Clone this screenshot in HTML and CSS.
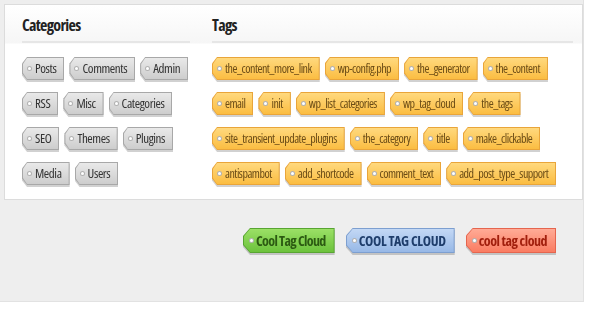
FILE: index.html
```html
<!DOCTYPE html>
<html lang="en">
<head>
    <meta charset="UTF-8">
    <title>Cool Tag Cloud</title>
    <link rel="stylesheet" href="styles.css">
</head>
<body>

    <div class="page">
        <div class="panel">
            <div class="col col-cat">
                <h3>Categories</h3>
                <div class="cloud">
                    <a class="tag silver"><span><span>Posts</span></span></a>
                    <a class="tag silver"><span><span>Comments</span></span></a>
                    <a class="tag silver"><span><span>Admin</span></span></a>
                    <a class="tag silver"><span><span>RSS</span></span></a>
                    <a class="tag silver"><span><span>Misc</span></span></a>
                    <a class="tag silver"><span><span>Categories</span></span></a>
                    <a class="tag silver"><span><span>SEO</span></span></a>
                    <a class="tag silver"><span><span>Themes</span></span></a>
                    <a class="tag silver"><span><span>Plugins</span></span></a>
                    <a class="tag silver"><span><span>Media</span></span></a>
                    <a class="tag silver"><span><span>Users</span></span></a>
                </div>
            </div>
            <div class="col col-tags">
                <h3>Tags</h3>
                <div class="cloud">
                    <a class="tag gold"><span><span>the_content_more_link</span></span></a>
                    <a class="tag gold"><span><span>wp-config.php</span></span></a>
                    <a class="tag gold"><span><span>the_generator</span></span></a>
                    <a class="tag gold"><span><span>the_content</span></span></a>
                    <a class="tag gold"><span><span>email</span></span></a>
                    <a class="tag gold"><span><span>init</span></span></a>
                    <a class="tag gold"><span><span>wp_list_categories</span></span></a>
                    <a class="tag gold"><span><span>wp_tag_cloud</span></span></a>
                    <a class="tag gold"><span><span>the_tags</span></span></a>
                    <a class="tag gold"><span><span>site_transient_update_plugins</span></span></a>
                    <a class="tag gold"><span><span>the_category</span></span></a>
                    <a class="tag gold"><span><span>title</span></span></a>
                    <a class="tag gold"><span><span>make_clickable</span></span></a>
                    <a class="tag gold"><span><span>antispambot</span></span></a>
                    <a class="tag gold"><span><span>add_shortcode</span></span></a>
                    <a class="tag gold"><span><span>comment_text</span></span></a>
                    <a class="tag gold"><span><span>add_post_type_support</span></span></a>
                </div>
            </div>
        </div>

        <div class="samples">
            <a class="tag big green"><span><span>Cool Tag Cloud</span></span></a>
            <a class="tag big blue"><span><span>COOL TAG CLOUD</span></span></a>
            <a class="tag big red"><span><span>cool tag cloud</span></span></a>
        </div>
    </div>

</body>
</html>
```

FILE: styles.css
```css
body {
    margin: 0;
    background: #fff;
    font-family: "Open Sans", "Liberation Sans", Arial, sans-serif;
    font-stretch: 75%;
}

.page {
    width: 584px;
    height: 302px;
    box-sizing: border-box;
    padding: 4px 0 0 4px;
    background: #eeeeee;
    border-bottom: 1px solid #e2e2e2;
    border-right: 1px solid #e2e2e2;
}

.panel {
    width: 579px;
    height: 196px;
    box-sizing: border-box;
    display: flex;
    gap: 22px;
    padding: 0 9px 0 17px;
    background: linear-gradient(#fff 0, #f6f6f6 38px, #fff 39px);
    border: 1px solid #dcdcdc;
}

.col-cat {
    width: 168px;
}

.col-tags {
    flex: 1;
}

h3 {
    margin: 0;
    height: 36px;
    line-height: 40px;
    font-size: 16px;
    font-weight: bold;
    letter-spacing: -0.7px;
    color: #222;
    border-bottom: 2px solid #e6e6e6;
}

.cloud {
    display: flex;
    flex-wrap: wrap;
    gap: 12px 5px;
    margin-top: 14px;
}

/* tag shape: outer = shadow, middle = border colour, inner = face */
.tag {
    display: block;
    filter: drop-shadow(0 2px 0 rgba(0, 0, 0, 0.18));
    cursor: pointer;
}

.tag > span {
    display: block;
    padding: 1px;
    clip-path: polygon(5px 0, 100% 0, 100% 100%, 5px 100%, 0 72%, 0 28%);
}

.tag > span > span {
    position: relative;
    display: block;
    height: 21px;
    line-height: 21px;
    padding: 0 7px 0 12px;
    font-size: 13px;
    letter-spacing: -0.4px;
    white-space: nowrap;
    clip-path: polygon(4px 0, 100% 0, 100% 100%, 4px 100%, 0 72%, 0 28%);
}

.tag > span > span::before {
    content: "";
    position: absolute;
    left: 4px;
    top: 8px;
    width: 3px;
    height: 3px;
    border-radius: 50%;
    background: #fff;
    border: 1px solid rgba(0, 0, 0, 0.3);
}

.silver > span { background: #a8a8a8; }
.silver > span > span {
    background: linear-gradient(#e9e9e9, #cdcdcd);
    color: #333;
}

.gold > span { background: #e9a53a; }
.gold > span > span {
    background: linear-gradient(#ffd97e, #fbbd42);
    color: #6b4c16;
    font-size: 12px;
    letter-spacing: -0.5px;
}

.samples {
    display: flex;
    gap: 11px;
    padding: 28px 0 0 239px;
}

.big > span {
    clip-path: polygon(7px 0, 100% 0, 100% 100%, 7px 100%, 0 68%, 0 32%);
}

.big > span > span {
    height: 23px;
    line-height: 23px;
    padding: 0 8px 0 12px;
    font-size: 14px;
    letter-spacing: -0.65px;
    font-weight: bold;
    clip-path: polygon(6px 0, 100% 0, 100% 100%, 6px 100%, 0 68%, 0 32%);
}

.big > span > span::before {
    top: 9px;
    left: 5px;
}

.green > span { background: #58a532; }
.green > span > span {
    background: linear-gradient(#9be066, #6cc23c);
    color: #2c5a12;
}

.blue > span { background: #7d9fd0; }
.blue > span > span {
    background: linear-gradient(#c3d8f5, #97b8e6);
    color: #1e3d6b;
    letter-spacing: -0.35px;
}

.red > span { background: #e5654e; }
.red > span > span {
    background: linear-gradient(#ffab96, #fa7c62);
    color: #a11f0d;
    letter-spacing: -0.45px;
}
```
